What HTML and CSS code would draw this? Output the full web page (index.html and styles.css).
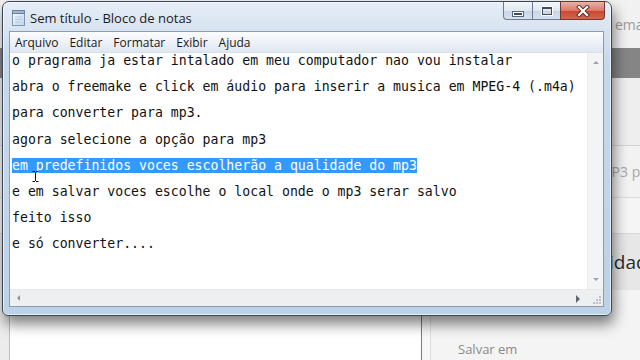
FILE: index.html
```html
<!DOCTYPE html>
<html lang="pt">
<head>
<meta charset="utf-8">
<title>Sem título - Bloco de notas</title>
<link rel="stylesheet" href="styles.css">
</head>
<body>
<div class="desktop">
  <div class="app">
    <div class="app-head"><span class="app-title">emake</span></div>
    <div class="app-band"></div>
    <div class="app-sec1"></div>
    <div class="app-sec2"><span class="app-label">MP3 p</span></div>
    <div class="app-sec3a"></div>
    <div class="app-sec3b"><span class="app-big">idad</span></div>
    <div class="app-bottom">
      <div class="app-edge"></div>
      <div class="app-left"></div>
      <div class="app-gap"></div>
      <div class="app-right"><span class="app-save">Salvar em</span></div>
    </div>
  </div>

  <div class="window">
    <div class="titlebar">
      <svg class="title-icon" width="13" height="16" viewBox="0 0 13 16">
        <defs>
          <linearGradient id="pg" x1="0" y1="0" x2="1" y2="1">
            <stop offset="0" stop-color="#ffffff"/>
            <stop offset="1" stop-color="#b9d3ee"/>
          </linearGradient>
        </defs>
        <rect x="0.5" y="1.5" width="12" height="14" fill="url(#pg)" stroke="#7f97b3"/>
        <rect x="0.5" y="0.5" width="12" height="3" fill="#9fb7d2" stroke="#6a829f"/>
        <path d="M3 7h7M3 9.5h7M3 12h5" stroke="#b6c6d8" stroke-width="1"/>
      </svg>
      <span class="title-text">Sem título - Bloco de notas</span>
      <div class="caption">
        <div class="cbtn cmin"><span class="min-glyph"></span></div>
        <div class="cbtn cmax"><span class="max-glyph"></span></div>
        <div class="cbtn cclose">
          <svg width="14" height="12" viewBox="0 0 14 12">
            <path d="M3 2 L11 10 M11 2 L3 10" stroke="#5a2a22" stroke-width="4" stroke-linecap="square"/>
            <path d="M3 2 L11 10 M11 2 L3 10" stroke="#ffffff" stroke-width="2.2" stroke-linecap="square"/>
          </svg>
        </div>
      </div>
    </div>
    <div class="client">
      <div class="menubar">
        <span class="menu-item">Arquivo</span>
        <span class="menu-item">Editar</span>
        <span class="menu-item">Formatar</span>
        <span class="menu-item">Exibir</span>
        <span class="menu-item">Ajuda</span>
      </div>
      <div class="edit">
        <div class="text">
          <div class="line">o pragrama ja estar intalado em meu computador nao vou instalar</div>
          <div class="line">abra o freemake e click em áudio para inserir a musica em MPEG-4 (.m4a)</div>
          <div class="line">para converter para mp3.</div>
          <div class="line">agora selecione a opção para mp3</div>
          <div class="line"><span class="sel">em predefinidos voces escolherão a qualidade do mp3</span></div>
          <div class="line">e em salvar voces escolhe o local onde o mp3 serar salvo</div>
          <div class="line">feito isso</div>
          <div class="line">e só converter....</div>
          <svg class="ibeam" width="7" height="11" viewBox="0 0 7 11">
            <path d="M0.5 0.5h2.5M4 0.5h2.5M3.5 1v9M0.5 10.5h2.5M4 10.5h2.5" stroke="#111" stroke-width="1" fill="none"/>
          </svg>
        </div>
        <div class="vscroll">
          <span class="arr-up"></span>
          <span class="arr-down"></span>
        </div>
        <div class="hscroll">
          <span class="arr-left"></span>
          <span class="arr-right"></span>
        </div>
        <div class="grip">
          <svg width="9" height="9" viewBox="0 0 9 9">
            <g fill="#b8c0c8">
              <rect x="7" y="1" width="2" height="2"/>
              <rect x="4" y="4" width="2" height="2"/><rect x="7" y="4" width="2" height="2"/>
              <rect x="1" y="7" width="2" height="2"/><rect x="4" y="7" width="2" height="2"/><rect x="7" y="7" width="2" height="2"/>
            </g>
          </svg>
        </div>
      </div>
    </div>
  </div>
</div>
</body>
</html>
```

FILE: styles.css
```css
* { box-sizing: border-box; }
html, body { margin: 0; padding: 0; }
body { width: 640px; height: 360px; overflow: hidden; font-family: "Open Sans", "Noto Sans", sans-serif; }

.desktop { position: relative; width: 640px; height: 360px; overflow: hidden; background: #f3f3f3; }

/* background application */
.app { display: flex; flex-direction: column; width: 640px; height: 360px; }
.app-head { height: 48px; background: #f1f1f1; display: flex; align-items: center; padding-left: 615px; white-space: nowrap; overflow: hidden; }
.app-title { font-size: 14px; color: #9c9c9c; }
.app-band { height: 30px; background: #858585; }
.app-sec1 { height: 68px; background: #eeeeee; border-bottom: 1px solid #d4d4d4; }
.app-sec2 { height: 52px; background: #f2f2f2; border-bottom: 1px solid #dcdcdc; display: flex; align-items: center; padding-left: 599px; white-space: nowrap; overflow: hidden; }
.app-label { font-size: 14px; color: #a8a8a8; }
.app-sec3a { height: 36px; background: #f5f5f5; border-bottom: 1px solid #d8d8d8; }
.app-sec3b { height: 56px; background: #e7e7e7; display: flex; align-items: center; padding-left: 609px; white-space: nowrap; overflow: hidden; }
.app-big { font-size: 19px; color: #2a2a2a; }
.app-bottom { flex: 1; display: flex; }
.app-edge { width: 10px; background: #ececec; border-right: 1px solid #bcbcbc; }
.app-left { width: 412px; background: #ffffff; border-right: 1px solid #7a7a7a; }
.app-gap { width: 9px; background: #f7f7f7; border-right: 1px solid #dedede; }
.app-right { flex: 1; background: #f4f4f4; padding: 47px 0 0 27px; }
.app-save { font-size: 13px; color: #8a8a8a; }

/* notepad window */
.window {
  position: absolute; left: 2px; top: 1px; width: 610px; height: 315px;
  border: 1px solid #3a4656; border-radius: 7px 7px 6px 6px;
  background: linear-gradient(180deg, #e6eef7 0px, #d7e3f0 28px, #c6d8eb 60px, #bdd1e7 100%);
  padding: 0 7px 8px 6px;
  display: flex; flex-direction: column;
  box-shadow: 2px 8px 14px rgba(0,0,0,0.5), inset 0 0 0 1px rgba(255,255,255,0.6);
}
.titlebar { height: 29px; display: flex; align-items: center; position: relative; }
.title-icon { margin-left: 3px; margin-top: 3px; flex: none; }
.title-text { margin-left: 5px; margin-top: 2px; font-size: 13px; color: #1b1b1b; }
.caption { margin-left: auto; margin-right: -1px; align-self: flex-start; display: flex; height: 18px; }
.cbtn { height: 18px; display: flex; align-items: center; justify-content: center; border: 1px solid #6c7d93; border-top: none; }
.cmin { width: 29px; border-radius: 0 0 0 4px; border-right: none; background: linear-gradient(180deg, #f4f7fb, #dfe7f1 50%, #c8d5e5 51%, #d6e1ee); }
.cmax { width: 28px; border-right: none; background: linear-gradient(180deg, #f4f7fb, #dfe7f1 50%, #c8d5e5 51%, #d6e1ee); }
.cclose { width: 45px; border-radius: 0 0 4px 0; border-color: #6f3a31; background: linear-gradient(180deg, #eeb1a3, #dc7966 50%, #c9452f 51%, #d3664f); }
.min-glyph { width: 10px; height: 4px; margin-top: 6px; background: #3d4e63; border: 1px solid #ffffff; box-shadow: 0 0 0 1px #56677c; }
.max-glyph { width: 10px; height: 8px; border: 1px solid #3d4e63; border-top-width: 2px; box-shadow: 0 0 0 1px #ffffff; }

.client { flex: 1; display: flex; flex-direction: column; border: 1px solid #8b9cb0; background: #ffffff; min-height: 0; }
.menubar { height: 21px; display: flex; align-items: center; gap: 11px; padding-left: 5px; background: linear-gradient(180deg, #fbfcfe, #eef2f8 50%, #dfe7f1); border-bottom: 1px solid #d8e0ea; }
.menu-item { font-size: 12px; color: #1a1a1a; }

.edit { flex: 1; display: grid; grid-template-columns: 1fr 16px; grid-template-rows: 1fr 17px; min-height: 0; }
.text { position: relative; overflow: hidden; padding: 0 0 0 2px; display: flex; flex-direction: column; gap: 10.2px;
  font-family: "DejaVu Sans Mono", "Liberation Mono", monospace; font-size: 13.2px; color: #111111; }
.line { line-height: 16px; white-space: pre; }
.sel { background: #3399ff; color: #ffffff; }
.ibeam { position: absolute; left: 22px; top: 118px; }

.vscroll { background: #f3f4f5; border-left: 1px solid #eceff2; position: relative; }
.hscroll { background: #eeeff0; border-top: 1px solid #e6e8ea; position: relative; }
.grip { background: #eeeff0; border-top: 1px solid #e6e8ea; display: flex; align-items: flex-end; justify-content: flex-end; padding: 0 2px 2px 0; }
.arr-up, .arr-down, .arr-left, .arr-right { position: absolute; width: 0; height: 0; }
.arr-up { left: 5px; top: 8px; border-left: 3px solid transparent; border-right: 3px solid transparent; border-bottom: 3px solid #9aa3ad; }
.arr-down { left: 5px; bottom: 8px; border-left: 3px solid transparent; border-right: 3px solid transparent; border-top: 3px solid #9aa3ad; }
.arr-left { left: 7px; top: 5px; border-top: 3px solid transparent; border-bottom: 3px solid transparent; border-right: 3px solid #8c959f; }
.arr-right { right: 7px; top: 5px; border-top: 4px solid transparent; border-bottom: 4px solid transparent; border-left: 4px solid #5f6770; }
```
